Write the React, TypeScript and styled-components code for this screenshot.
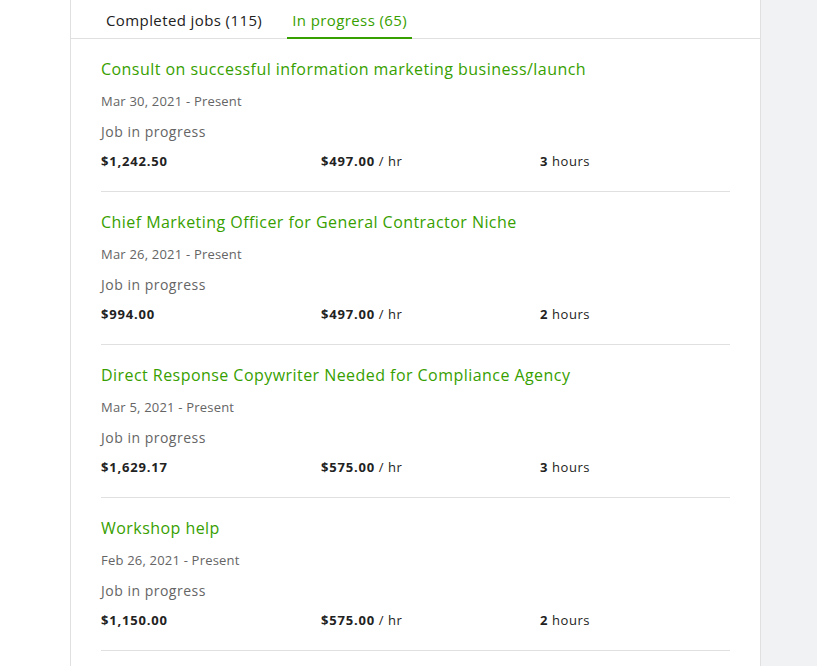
import React from 'react';
import styled, { createGlobalStyle } from 'styled-components';

const GlobalStyle = createGlobalStyle`
  html, body {
    margin: 0;
    padding: 0;
    background: #ffffff;
    font-family: "Open Sans", "Liberation Sans", sans-serif;
    color: #222222;
  }
`;

const Page = styled.div`
  display: flex;
  min-height: 666px;
`;

const Gutter = styled.div`
  width: 70px;
  flex-shrink: 0;
  background: #ffffff;
`;

const Panel = styled.section`
  width: 689px;
  flex-shrink: 0;
  background: #ffffff;
  border-left: 1px solid #e0e0e0;
  border-right: 1px solid #e0e0e0;
`;

const Side = styled.div`
  flex: 1;
  background: #f1f2f4;
`;

const Tabs = styled.nav`
  display: flex;
  gap: 20px;
  height: 38px;
  padding-left: 30px;
  border-bottom: 1px solid #e0e0e0;
`;

const Tab = styled.button<{ active?: boolean }>`
  all: unset;
  box-sizing: border-box;
  height: 39px;
  padding: 1px 5px 0;
  font-size: 15px;
  letter-spacing: 0.4px;
  line-height: 39px;
  color: ${p => (p.active ? '#37a000' : '#222222')};
  border-bottom: 2px solid ${p => (p.active ? '#37a000' : 'transparent')};
  cursor: pointer;
`;

const List = styled.div`
  padding: 0 30px;
`;

const Job = styled.article`
  padding: 19px 0 20px;
  border-bottom: 1px solid #e0e0e0;
`;

const Title = styled.a`
  display: block;
  font-size: 16px;
  letter-spacing: 0.45px;
  line-height: 22px;
  color: #37a000;
  text-decoration: none;
`;

const Meta = styled.div<{ gap: number }>`
  margin-top: ${p => p.gap}px;
  font-size: 13px;
  letter-spacing: 0.2px;
  line-height: 20px;
  color: #656565;
`;

const Status = styled(Meta)`
  font-size: 14px;
  letter-spacing: 0.5px;
`;

const Stats = styled.div`
  display: grid;
  grid-template-columns: 220px 219px 1fr;
  margin-top: 9px;
  font-size: 13px;
  letter-spacing: 0.5px;
  line-height: 20px;
  color: #222222;
`;

const Stat = styled.div`
  b {
    font-weight: 700;
    letter-spacing: 0.8px;
  }
`;

const jobs = [
  { title: 'Consult on successful information marketing business/launch', date: 'Mar 30, 2021 - Present', total: '$1,242.50', rate: '$497.00', hours: 3 },
  { title: 'Chief Marketing Officer for General Contractor Niche', date: 'Mar 26, 2021 - Present', total: '$994.00', rate: '$497.00', hours: 2 },
  { title: 'Direct Response Copywriter Needed for Compliance Agency', date: 'Mar 5, 2021 - Present', total: '$1,629.17', rate: '$575.00', hours: 3 },
  { title: 'Workshop help', date: 'Feb 26, 2021 - Present', total: '$1,150.00', rate: '$575.00', hours: 2 },
];

const App: React.FC = () => (
  <>
    <GlobalStyle />
    <Page>
      <Gutter />
      <Panel>
        <Tabs>
          <Tab>Completed jobs (115)</Tab>
          <Tab active>In progress (65)</Tab>
        </Tabs>
        <List>
          {jobs.map(job => (
            <Job key={job.title}>
              <Title href="#">{job.title}</Title>
              <Meta gap={11}>{job.date}</Meta>
              <Status gap={11}>Job in progress</Status>
              <Stats>
                <Stat><b>{job.total}</b></Stat>
                <Stat><b>{job.rate}</b> / hr</Stat>
                <Stat><b>{job.hours}</b> hours</Stat>
              </Stats>
            </Job>
          ))}
        </List>
      </Panel>
      <Side />
    </Page>
  </>
);

export default App;
